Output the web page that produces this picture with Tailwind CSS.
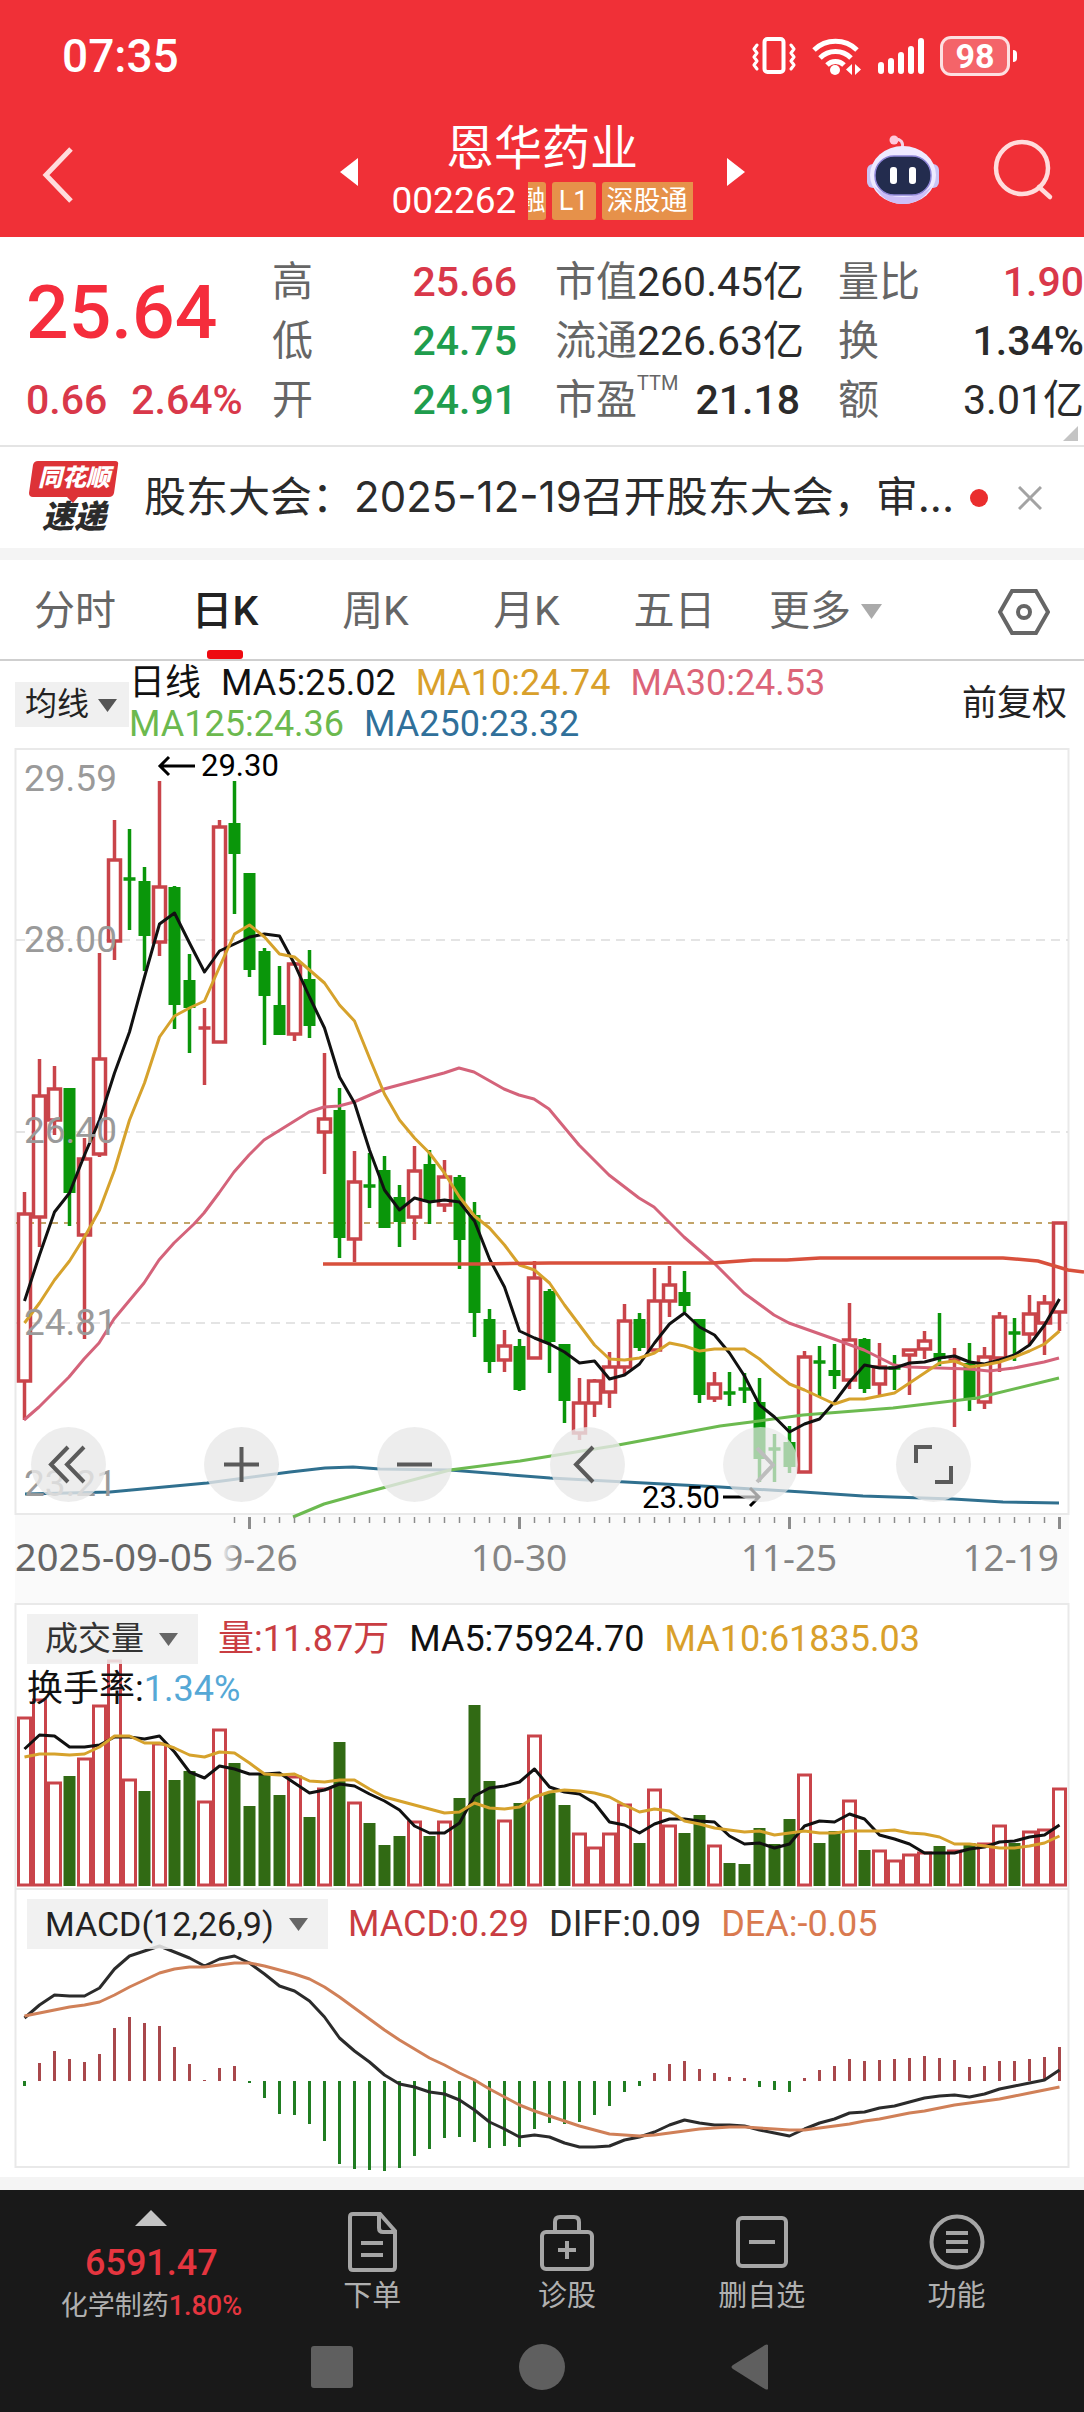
<!DOCTYPE html>
<html lang="zh-CN">
<head>
  <meta charset="UTF-8">
  <title>恩华药业 002262</title>
  <meta name="viewport" content="width=device-width, initial-scale=1.0">
  <!-- Tailwind CSS CDN -->
  <script src="https://cdn.jsdelivr.net/npm/@tailwindcss/browser@4"></script>
</head>
<body class="bg-white font-[Roboto,'Noto_Sans_CJK_SC',sans-serif] text-[#2b2b2b] overflow-x-hidden">

  <!-- Status bar + title -->
  <header class="bg-[#f03037] text-white">
    <div class="h-[110px] pl-[62px] pr-[67px] pt-[2px] flex items-center justify-between">
      <span class="text-[46px] leading-none font-medium">07:35</span>
      <div class="flex items-center gap-4">
        <svg class="w-[44px] h-[38px]" viewBox="0 0 44 38" fill="none" stroke="#fff" stroke-width="3" stroke-linecap="round" stroke-linejoin="round">
          <rect x="12.5" y="2" width="19" height="33" rx="3" stroke-width="4" />
          <path d="M5 8l-3 4 3 4-3 4 3 4-3 4 3 4M39 8l3 4-3 4 3 4-3 4 3 4-3 4" />
        </svg>
        <svg class="w-[50px] h-[38px]" viewBox="0 0 50 38" fill="none" stroke="#fff" stroke-width="5">
          <path d="M2 13a31 31 0 0 1 43 0M8 21a22 22 0 0 1 31 0M15 28a12 12 0 0 1 17 0" />
          <circle cx="23" cy="33" r="5" fill="#fff" stroke="none" />
          <path d="M40 27v11l-6-5.500zM43 27v11l6-5.500z" fill="#fff" stroke="none" />
        </svg>
        <svg class="w-[46px] h-[38px]" viewBox="0 0 46 38" stroke="#fff" stroke-width="6" stroke-linecap="round">
          <path d="M3 28v6M13 24v10M23 18v16M33 12v22M43 4v30" />
        </svg>
        <div class="flex items-center gap-[3px]">
          <span class="w-[70px] h-[40px] rounded-[11px] border-[3px] border-white/80 bg-white/25 flex items-center justify-center text-[34px] leading-none font-bold">98</span>
          <span class="w-1 h-3 rounded-r-full bg-white"></span>
        </div>
      </div>
    </div>

    <div class="relative h-[127px]">
      <button class="absolute left-[38px] top-9" aria-label="返回">
        <svg class="w-9 h-[58px]" viewBox="0 0 36 58" fill="none" stroke="#ffdcdc" stroke-width="5"><path d="M33 3L8 29l25 26" /></svg>
      </button>

      <div class="flex justify-center">
        <div class="flex items-center gap-[34px] pt-[10px]">
          <button aria-label="上一只"><svg class="w-[18px] h-7" viewBox="0 0 18 28"><path d="M18 0v28L0 14z" fill="#fff" /></svg></button>
          <div class="flex flex-col items-center">
            <h1 class="text-[48px] leading-[58px]">恩华药业</h1>
            <div class="flex items-center h-[46px]">
              <span class="text-[37px] w-[136px]">002262</span>
              <div class="flex gap-[6px] text-[27px] leading-[38px]">
                <span class="w-[18px] h-[38px] overflow-hidden flex justify-end bg-[#e6914a] rounded-r-[3px]"><span>融</span></span>
                <span class="w-11 h-[38px] text-center bg-[#e6914a] rounded-[3px]">L1</span>
                <span class="w-[91px] h-[38px] text-center bg-[#e6914a] rounded-l-[3px]">深股通</span>
              </div>
            </div>
          </div>
          <button aria-label="下一只"><svg class="w-[18px] h-7" viewBox="0 0 18 28"><path d="M0 0v28l18-14z" fill="#fff" /></svg></button>
        </div>
      </div>

      <div class="absolute right-[30px] top-[24px] flex items-center gap-[52px]">
        <button aria-label="智能助手">
          <svg class="w-[74px] h-[72px]" viewBox="0 0 74 72">
            <path d="M36 14c2-6-2-9-6-9" fill="none" stroke="#f3d3e6" stroke-width="3" />
            <circle cx="28" cy="6" r="4.500" fill="#ffc9dc" />
            <rect x="1" y="30" width="12" height="24" rx="6" fill="#c9c4f5" />
            <rect x="61" y="30" width="12" height="24" rx="6" fill="#c9c4f5" />
            <ellipse cx="37" cy="41" rx="33" ry="29" fill="#eeeaff" />
            <path d="M8 52c9 16 22 18 29 18s20-2 29-18c-8 8-18 11-29 11S16 60 8 52z" fill="#cdbff8" />
            <rect x="9" y="22" width="56" height="39" rx="19" fill="#232c4e" stroke="#8f86d8" stroke-width="1.500" />
            <rect x="24" y="33" width="7" height="17" rx="3" fill="#fff" />
            <rect x="43" y="33" width="7" height="17" rx="3" fill="#fff" />
          </svg>
        </button>
        <button aria-label="搜索">
          <svg class="w-[62px] h-[62px]" viewBox="0 0 62 62" fill="none" stroke="#ffdcdc" stroke-width="4.500" stroke-linecap="round">
            <circle cx="30" cy="29" r="26" /><path d="M47 48l11 10" />
          </svg>
        </button>
      </div>
    </div>
  </header>

  <!-- Quote summary -->
  <section class="relative grid grid-cols-[minmax(0,208fr)_minmax(0,245fr)_minmax(0,245fr)_minmax(0,246fr)] gap-x-[38px] pl-[26px] pt-4 pb-[15px] border-b-2 border-[#e4e4e4] text-[41px] leading-[59px] whitespace-nowrap">
    <div class="text-[#d9384a]">
      <div class="text-[75px] leading-[118px] font-medium text-[#f52d3c]">25.64</div>
      <div class="flex gap-6 font-medium"><span>0.66</span><span>2.64%</span></div>
    </div>
    <div>
      <div class="flex justify-between"><span class="text-[#666]">高</span><span class="text-[#d9384a] font-medium">25.66</span></div>
      <div class="flex justify-between"><span class="text-[#666]">低</span><span class="text-[#1f9d4d] font-medium">24.75</span></div>
      <div class="flex justify-between"><span class="text-[#666]">开</span><span class="text-[#1f9d4d] font-medium">24.91</span></div>
    </div>
    <div>
      <div class="flex justify-between"><span class="text-[#666]">市值</span><span>260.45亿</span></div>
      <div class="flex justify-between"><span class="text-[#666]">流通</span><span>226.63亿</span></div>
      <div class="flex justify-between"><span class="flex text-[#666]">市盈<span class="text-[20px] leading-[24px]">TTM</span></span><span class="font-medium">21.18</span></div>
    </div>
    <div>
      <div class="flex justify-between"><span class="text-[#666]">量比</span><span class="text-[#d9384a] font-medium">1.90</span></div>
      <div class="flex justify-between"><span class="text-[#666]">换</span><span class="font-medium">1.34%</span></div>
      <div class="flex justify-between"><span class="text-[#666]">额</span><span>3.01亿</span></div>
    </div>
    <svg class="absolute right-[6px] bottom-1 w-[15px] h-[15px]" viewBox="0 0 15 15"><path d="M15 0v15H0z" fill="#c4c4c4" /></svg>
  </section>

  <!-- News flash -->
  <section class="h-[101px] pl-[29px] pr-[42px] flex items-center">
    <div class="relative w-[90px] h-[74px] shrink-0 italic font-black text-center">
      <svg class="absolute left-0 top-0 w-[90px] h-[42px]" viewBox="0 0 90 42"><path d="M9 0h77q4 0 3 4l-4 28q-1 4-5 4H49l-5 6-6-6H4q-4 0-4-4L4 4q1-4 5-4z" fill="#dd3237" /></svg>
      <div class="relative text-white text-[24px] leading-[34px]">同花顺</div>
      <div class="relative text-[32px] leading-[44px] text-[#2b2b2b]">速递</div>
    </div>
    <a href="#" class="ml-[25px] grow min-w-0 text-[42px] leading-[60px] whitespace-nowrap overflow-hidden">股东大会：<span class="font-[Inter]">2025-12-19</span>召开股东大会，审<span class="font-[Inter]">...</span></a>
    <span class="w-[18px] h-[18px] rounded-full bg-[#ea2d2d] shrink-0"></span>
    <button class="ml-[30px] shrink-0" aria-label="关闭">
      <svg class="w-[24px] h-[24px]" viewBox="0 0 24 24" stroke="#a3a3a3" stroke-width="3"><path d="M1 1l22 22M23 1L1 23" /></svg>
    </button>
  </section>
  <div class="h-3 bg-[#f4f4f4]"></div>

  <!-- Period tabs -->
  <nav class="h-[101px] border-b-2 border-[#cfcfcf] grid grid-cols-[150fr_150fr_151fr_151fr_145fr_157fr_180fr] text-[41px] text-[#666]">
    <button class="pt-1">分时</button>
    <button class="relative pt-1 font-medium text-[#222]">日K<span class="absolute bottom-0 left-1/2 -translate-x-1/2 w-9 h-[9px] rounded-[3px] bg-[#ee0a10]"></span></button>
    <button class="pt-1">周K</button>
    <button class="pt-1">月K</button>
    <button class="pt-1">五日</button>
    <button class="pt-1 flex items-center justify-center gap-[10px]">更多<svg class="w-[21px] h-[15px]" viewBox="0 0 21 15"><path d="M0 0h21L10.500 15z" fill="#aaa" /></svg></button>
    <button class="pt-1 justify-self-end mr-[34px]" aria-label="设置">
      <svg class="w-[52px] h-[46px]" viewBox="0 0 52 46" fill="none" stroke="#666" stroke-width="4"><path d="M14 2h24l12 21-12 21H14L2 23z" /><circle cx="26" cy="23" r="6" /></svg>
    </button>
  </nav>

  <!-- Moving averages -->
  <section class="h-[84px] pl-[15px] pr-[17px] pt-[2px] flex items-center">
    <label class="relative shrink-0">
      <select class="appearance-none w-[114px] h-[45px] pl-[10px] bg-[#f0f0f0] text-[32px] leading-[45px] text-[#222]" aria-label="均线"><option>均线</option></select>
      <svg class="absolute right-3 top-[17px] w-[19px] h-[13px]" viewBox="0 0 19 13"><path d="M0 0h19L9.500 13z" fill="#555" /></svg>
    </label>
    <div class="grow text-[36px] leading-[41px] text-[#111] flex flex-wrap gap-x-5 whitespace-nowrap">
      <span>日线</span><span>MA5:25.02</span><span class="text-[#d9a02b]">MA10:24.74</span><span class="text-[#dc6478]">MA30:24.53</span>
      <span class="text-[#6cb94e]">MA125:24.36</span><span class="text-[#30709a]">MA250:23.32</span>
    </div>
    <button class="shrink-0 text-[35px] text-[#222]">前复权</button>
  </section>

  <!-- K line chart -->
  <section class="relative">
    <svg id="kline" class="block w-full" viewBox="0 5 1084 858">
      <defs>
        <linearGradient id="fade" x1="0" x2="1"><stop offset="0.93" stop-color="#fafafa" /><stop offset="1" stop-color="#fafafa" stop-opacity="0" /></linearGradient>
      </defs>
      <rect x="15" y="775" width="1054" height="88" fill="#fafafa" />
      <rect x="15.500" y="9" width="1053" height="765" fill="none" stroke="#e9e9e9" stroke-width="2" />
      <path d="M16 200h1052M16 392h1052M16 583h1052" stroke="#dcdcdc" stroke-width="1.500" stroke-dasharray="9 6" />
      <path d="M16 483h1052" stroke="#c2a468" stroke-width="2" stroke-dasharray="6 6" />
      <g id="candles"></g>
      <g id="klines" fill="none" stroke-linejoin="round"></g>
      <path d="M323 524H480L550 523H713L740 521 753 520H787L820 518H1003L1038 521 1068 530 1084 532" fill="none" stroke="#d8503c" stroke-width="3.500" />
      <g font-size="37" fill="#9a9a9a">
        <text x="24" y="51">29.59</text><text x="24" y="212">28.00</text><text x="24" y="403">26.40</text><text x="24" y="595">24.81</text><text x="24" y="756">23.21</text>
      </g>
      <g font-size="31" fill="#000">
        <text x="201" y="36">29.30</text><text x="642" y="768">23.50</text>
      </g>
      <path d="M195 26h-35m9-9l-9 9 9 9M723 757h36m-9-9l9 9-9 9" fill="none" stroke="#000" stroke-width="3" />
      <g id="ticks"></g>
      <g class="font-['Noto_Sans']" font-size="37" fill="#858585">
        <text x="201" y="831">09-26</text><text x="519" y="831" text-anchor="middle">10-30</text><text x="789" y="831" text-anchor="middle">11-25</text><text x="1059" y="831" text-anchor="end">12-19</text>
      </g>
      <rect x="15" y="790" width="222" height="60" fill="url(#fade)" />
      <text class="font-['Noto_Sans']" x="15" y="831" font-size="38" fill="#666">2025-09-05</text>
    </svg>
    <div class="absolute left-[31px] bottom-[101px] flex gap-[98px] text-[#5a5a5a]">
      <button class="w-[75px] h-[75px] rounded-full bg-[#e8e8e8]/80" aria-label="最左"><svg viewBox="0 0 75 75" fill="none" stroke="currentColor" stroke-width="4"><path d="M37 20L20 37.500 37 55M53 20L36 37.500 53 55" /></svg></button>
      <button class="w-[75px] h-[75px] rounded-full bg-[#e8e8e8]/80" aria-label="放大"><svg viewBox="0 0 75 75" fill="none" stroke="currentColor" stroke-width="4"><path d="M37.500 20v35M20 37.500h35" /></svg></button>
      <button class="w-[75px] h-[75px] rounded-full bg-[#e8e8e8]/80" aria-label="缩小"><svg viewBox="0 0 75 75" fill="none" stroke="currentColor" stroke-width="4"><path d="M20 37.500h35" /></svg></button>
      <button class="w-[75px] h-[75px] rounded-full bg-[#e8e8e8]/80" aria-label="左移"><svg viewBox="0 0 75 75" fill="none" stroke="currentColor" stroke-width="4"><path d="M43 20L26 37.500 43 55" /></svg></button>
      <button class="w-[75px] h-[75px] rounded-full bg-[#e8e8e8]/70 text-[#bdbdbd]" aria-label="右移" disabled><svg viewBox="0 0 75 75" fill="none" stroke="currentColor" stroke-width="4"><path d="M34 21l16 17-16 17" /></svg></button>
      <button class="w-[75px] h-[75px] rounded-full bg-[#e8e8e8]/80" aria-label="全屏"><svg viewBox="0 0 75 75" fill="none" stroke="currentColor" stroke-width="4"><path d="M36 20H20v16M39 55h16V39" /></svg></button>
    </div>
  </section>

  <!-- Volume -->
  <section class="relative">
    <svg class="block w-full" viewBox="0 13 1084 287">
      <rect x="15.500" y="14" width="1053" height="285" fill="none" stroke="#e9e9e9" stroke-width="2" />
      <g id="volume"></g>
      <g id="volumeLines" fill="none" stroke-linejoin="round"></g>
    </svg>
    <div class="absolute left-[27px] top-[10px]">
      <div class="flex items-center gap-5 text-[36px] leading-[52px] whitespace-nowrap">
        <label class="relative">
          <select class="appearance-none block w-[171px] h-[50px] pl-[18px] bg-[#eeeeee]/85 text-[33px] leading-[50px] text-[#333]" aria-label="成交量"><option>成交量</option></select>
          <svg class="absolute right-5 top-[19px] w-[19px] h-[13px]" viewBox="0 0 19 13"><path d="M0 0h19L9.500 13z" fill="#666" /></svg>
        </label>
        <span class="text-[#c93d42]">量:11.87万</span>
        <span class="text-[#111]">MA5:75924.70</span>
        <span class="text-[#d9a02b]">MA10:61835.03</span>
      </div>
      <div class="text-[36px] leading-[48px] text-[#111]">换手率:<span class="text-[#55a8d6]">1.34%</span></div>
    </div>
  </section>

  <!-- MACD -->
  <section class="relative">
    <svg class="block w-full" viewBox="0 0 1084 287">
      <path d="M15.500 0V277H1068.500V0" fill="none" stroke="#e9e9e9" stroke-width="2" />
      <g id="macd"></g>
      <g id="macdLines" fill="none" stroke-linejoin="round"></g>
    </svg>
    <div class="absolute left-[27px] top-2 flex items-center gap-5 text-[36px] leading-[52px] whitespace-nowrap">
      <label class="relative">
        <select class="appearance-none block w-[301px] h-[50px] pl-[18px] bg-[#eeeeee]/85 text-[34px] leading-[50px] text-[#222]" aria-label="指标"><option>MACD(12,26,9)</option></select>
        <svg class="absolute right-5 top-[19px] w-[19px] h-[13px]" viewBox="0 0 19 13"><path d="M0 0h19L9.500 13z" fill="#666" /></svg>
      </label>
      <span class="text-[#c93d42]">MACD:0.29</span>
      <span>DIFF:0.09</span>
      <span class="text-[#d97a50]">DEA:-0.05</span>
    </div>
  </section>
  <div class="h-[13px] bg-[#f4f4f4]"></div>

  <!-- Bottom bar -->
  <footer class="bg-[#191919] text-[#b0b0b0]">
    <nav class="h-[132px] pr-[30px] grid grid-cols-[275fr_195fr_195fr_195fr_195fr] text-[29px] leading-[36px]">
      <button class="flex flex-col items-center pt-5 pl-7">
        <svg class="w-8 h-4" viewBox="0 0 32 16"><path d="M16 0l16 16H0z" fill="#c4c4c4" /></svg>
        <span class="mt-3 text-[36px] leading-[50px] font-medium text-[#e5353f]">6591.47</span>
        <span class="text-[27px] leading-[36px] whitespace-nowrap">化学制药<span class="text-[#e5353f] font-medium">1.80%</span></span>
      </button>
      <button class="flex flex-col items-center pt-[22px] gap-[6px]">
        <svg class="w-[60px] h-[60px]" viewBox="0 0 60 60" fill="none" stroke="#a6a6a6" stroke-width="4"><path d="M11 2h27l15 17v36q0 3-3 3H11q-3 0-3-3V5q0-3 3-3zM37 2v14q0 4 4 4h12M19 31h22M19 43h22" /></svg>
        <span>下单</span>
      </button>
      <button class="flex flex-col items-center pt-[22px] gap-[6px]">
        <svg class="w-[60px] h-[60px]" viewBox="0 0 60 60" fill="none" stroke="#a6a6a6" stroke-width="4"><rect x="5" y="20" width="50" height="37" rx="4" /><path d="M18 20V10q0-5 5-5h14q5 0 5 5v10M30 29v18M21 38h18" /></svg>
        <span>诊股</span>
      </button>
      <button class="flex flex-col items-center pt-[22px] gap-[6px]">
        <svg class="w-[60px] h-[60px]" viewBox="0 0 60 60" fill="none" stroke="#a6a6a6" stroke-width="4"><rect x="6" y="6" width="48" height="48" rx="4" /><path d="M17 30h26" /></svg>
        <span>删自选</span>
      </button>
      <button class="flex flex-col items-center pt-[22px] gap-[6px]">
        <svg class="w-[60px] h-[60px]" viewBox="0 0 60 60" fill="none" stroke="#a6a6a6" stroke-width="4"><circle cx="30" cy="30" r="25.500" /><path d="M19 21h22M19 30h22M19 39h22" /></svg>
        <span>功能</span>
      </button>
    </nav>
    <!-- System keys -->
    <div class="h-[90px] flex items-center justify-center gap-[164px]">
      <button aria-label="最近任务"><svg class="w-[46px] h-[46px]" viewBox="0 0 46 46"><rect x="2" y="2" width="42" height="42" rx="3" fill="#5f5f5f" /></svg></button>
      <button aria-label="主屏幕"><svg class="w-[46px] h-[46px]" viewBox="0 0 46 46"><circle cx="23" cy="23" r="23" fill="#5f5f5f" /></svg></button>
      <button aria-label="返回"><svg class="w-[46px] h-[46px]" viewBox="0 0 46 46"><path d="M39 1v44q-1 1-3 0L4 25q-3-2 0-4L36 1q2-1 3 0z" fill="#5f5f5f" /></svg></button>
    </div>
  </footer>

  <script>
    const STEP = 15, X0 = 24.5;
    const RED = '#c9444a', GREEN = '#0a960a';
    const x = i => X0 + i * STEP;

    // [direction, high, body top, body bottom, low]
    const candles = [
      ['r',452,474,641,680],['r',319,356,477,507],['r',326,349,380,395],['g',348,348,453,486],['r',398,419,495,599],
      ['r',213,319,414,417],['r',80,120,201,220],['g',89,139,139,190],['g',127,141,196,231],['r',41,147,202,216],
      ['g',146,147,265,289],['g',214,240,268,313],['r',268,288,288,345],['r',80,87,302,302],['g',41,83,114,174],
      ['g',133,133,230,237],['g',208,211,256,305],['g',226,265,295,295],['r',222,224,294,301],['g',210,239,286,298],
      ['r',313,379,392,434],['g',348,370,498,518],['r',411,442,499,522],['g',413,446,446,468],['g',416,430,488,488],
      ['g',445,457,482,507],['r',406,431,477,500],['g',410,424,462,484],['r',420,437,465,472],['g',435,437,500,529],
      ['g',462,475,573,597],['g',569,579,622,633],['r',590,606,620,632],['g',599,606,650,651],['r',521,538,618,618],
      ['g',549,551,602,633],['g',604,604,661,683],['r',638,663,693,700],['r',639,641,663,677],['r',612,627,652,668],
      ['r',564,581,627,634],['g',573,579,608,611],['r',528,561,610,610],['r',526,545,561,577],['g',531,552,566,572],
      ['g',579,579,655,663],['r',632,644,658,662],['g',632,653,655,666],['g',633,649,649,663],['g',638,662,719,742],
      ['g',694,709,709,742],['g',686,702,727,733],['r',611,617,732,732],['g',606,622,622,657],['g',604,630,636,649],
      ['r',563,600,640,649],['g',598,599,649,653],['r',603,627,644,657],['g',615,628,628,650],['r',610,610,615,655],
      ['r',591,601,609,619],['g',573,613,619,626],['r',608,620,620,687],['g',603,623,660,671],['r',607,617,662,669],
      ['r',572,577,618,632],['g',578,593,593,621],['r',555,574,594,604],['r',555,563,583,615],['r',482,483,572,591]
    ];

    const ma5 = [561,515,472,453,415,380,333,292,237,184,173,203,232,211,204,197,194,196,224,257,288,337,363,410,450,470,458,462,460,462,481,519,547,591,598,604,612,623,621,639,635,624,603,584,573,587,595,613,636,665,677,692,684,679,662,642,625,628,628,623,622,618,616,622,624,620,615,605,585,559];
    const ma10 = [583,563,540,521,497,470,430,380,343,297,276,268,261,227,194,185,197,214,217,230,243,265,281,318,354,380,398,413,433,457,476,488,505,525,530,543,565,585,605,619,620,618,613,603,606,611,609,609,609,619,632,644,650,657,664,659,659,656,653,643,633,623,621,627,625,622,617,611,604,591];
    const ma30 = '24,680 39,667 69,637 84,619 99,603 114,579 144,543 159,520 174,503 194,484 204,473 219,453 234,432 249,415 264,400 309,372 324,367 339,366 354,362 384,349 429,337 444,333 459,328 474,332 504,349 519,355 534,359 549,369 564,387 579,405 609,435 639,458 654,467 684,497 714,523 744,553 759,564 774,575 789,583 834,599 864,610 894,625 909,627 969,629 989,631 1014,628 1044,622 1059,618';
    const ma125 = '293,777 324,764 360,754 450,730 520,721 613,706 720,686 759,681 803,675 893,668 977,658 1059,638';
    const ma250 = '25,754 110,752 207,743 290,732 325,728 353,727 380,729 450,730 550,738 720,747 803,752 863,756 953,759 1003,762 1059,763';

    const volDir = 'rrrgrrrrgrggrrggggrgrgrgggrgrgggrgrggrrrrgrrggrgggggrggrgrrrrgrgrrgrrr';
    const volTop = [128,110,193,186,169,116,71,190,201,154,190,181,212,140,173,216,185,205,187,227,199,152,213,233,255,246,232,246,232,208,115,191,231,213,146,203,215,244,258,244,215,253,200,236,243,225,256,273,274,238,254,229,185,253,241,211,260,261,271,265,263,256,261,253,254,236,253,242,240,199];
    const volMa5 = [159,145,146,157,157,155,147,147,149,146,162,182,188,176,179,184,184,183,193,203,200,194,196,204,211,220,236,243,243,233,206,198,196,192,179,197,202,204,213,232,235,243,234,229,229,231,232,246,254,253,258,254,236,231,232,224,229,245,249,254,263,263,263,259,257,252,251,247,245,235];
    const volMa10 = [167,164,164,165,164,157,146,146,153,153,158,165,167,162,163,173,184,185,184,191,192,190,190,199,207,211,215,219,223,222,213,218,219,217,207,202,200,201,203,207,215,222,219,221,231,234,238,240,242,241,245,243,241,243,243,241,241,241,240,243,244,247,254,254,256,258,258,256,253,246];

    // bars above 191 are red, below are green
    const macd = [196,173,161,169,172,164,138,127,133,136,157,174,190,178,176,193,208,224,225,234,251,274,279,280,281,278,266,259,248,247,252,258,256,257,239,233,234,232,225,216,202,196,183,174,171,179,183,187,188,197,200,202,188,180,176,169,171,170,169,168,166,168,170,177,176,171,171,169,167,157];
    const diff = [128,115,105,106,106,98,79,66,61,56,62,68,76,69,66,73,84,96,101,111,127,148,161,172,185,194,197,202,204,210,220,232,239,247,245,247,253,257,257,256,250,247,242,235,230,233,235,235,236,240,243,246,239,233,229,223,222,218,216,212,208,206,205,207,204,199,196,193,190,180];
    const dea = [126,123,120,117,115,112,105,97,90,83,79,77,77,75,73,73,76,80,84,89,97,107,118,129,140,150,159,168,175,183,190,199,207,215,221,226,231,236,240,244,245,246,245,243,241,239,238,237,237,238,239,240,240,238,236,234,231,229,226,223,221,218,215,213,211,209,206,203,200,197];

    const points = arr => arr.map((v, i) => `${x(i)},${v}`).join(' ');
    const line = (pts, color) => `<polyline points="${pts}" stroke="${color}" stroke-width="3" />`;
    const put = (id, html) => { document.getElementById(id).innerHTML = html; };

    put('candles', candles.map(([d, hi, top, bot, lo], i) => {
      const c = d === 'r' ? RED : GREEN;
      const cx = x(i);
      if (bot - top < 3) {
        return `<path d="M${cx} ${hi}V${lo}M${cx - 6} ${top}H${cx + 6}" stroke="${c}" stroke-width="3.500" />`;
      }
      const wick = `<path d="M${cx} ${hi}V${top}M${cx} ${bot}V${lo}" stroke="${c}" stroke-width="3.500" />`;
      const body = d === 'r'
        ? `<rect x="${cx - 6}" y="${top}" width="12" height="${bot - top}" fill="#fff" stroke="${c}" stroke-width="3.500" />`
        : `<rect x="${cx - 6}" y="${top}" width="12" height="${bot - top}" fill="${c}" />`;
      return wick + body;
    }).join(''));

    put('klines', line(ma250, '#30708f') + line(ma125, '#6cba50') + line(ma30, '#d4637a')
      + line(points(ma5), '#111') + line(points(ma10), '#d6a22c'));

    let ticks = '';
    for (let i = 14; i < 70; i++) {
      const major = (i - 15) % 18 === 0;
      ticks += `<path d="M${x(i)} 777v${major ? 12 : 6}" stroke="#8c8c8c" stroke-width="${major ? 3 : 1.5}" />`;
    }
    put('ticks', ticks);

    put('volume', volTop.map((t, i) => volDir[i] === 'r'
      ? `<rect x="${x(i) - 6}" y="${t}" width="12" height="${295 - t}" fill="#fff" stroke="${RED}" stroke-width="3" />`
      : `<rect x="${x(i) - 6}" y="${t}" width="12" height="${296 - t}" fill="#316a14" />`).join(''));
    put('volumeLines', line(points(volMa5), '#111') + line(points(volMa10), '#d6a22c'));

    put('macd', macd.map((v, i) => `<path d="M${x(i)} 191V${v}" stroke="${v < 191 ? '#a8474b' : '#207d22'}" stroke-width="3" />`).join(''));
    put('macdLines', line(points(diff), '#2b2b2b') + line(points(dea), '#d08058'));
  </script>
</body>
</html>
